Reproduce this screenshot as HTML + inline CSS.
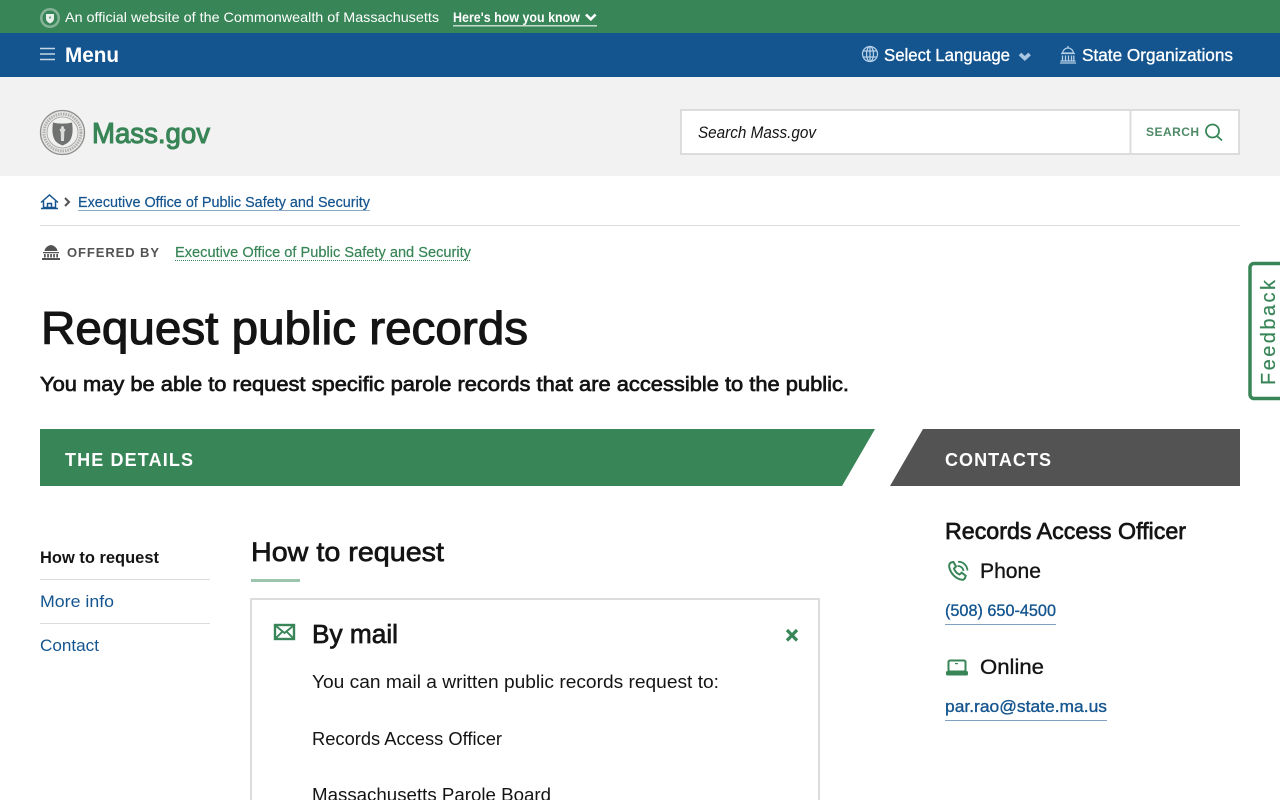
<!DOCTYPE html>
<html lang="en">
<head>
<meta charset="utf-8">
<title>Request public records | Mass.gov</title>
<style>
html,body{margin:0;padding:0;width:1280px;height:800px;overflow:hidden;background:#fff}
svg{display:block}
text{font-family:"Liberation Sans",sans-serif;white-space:pre}
.l{stroke:currentColor;stroke-width:.2px}
.m{stroke:currentColor;stroke-width:.35px}
.s{stroke:currentColor;stroke-width:.7px}
.x{stroke:currentColor;stroke-width:1.1px}
</style>
</head>
<body>
<svg xmlns="http://www.w3.org/2000/svg" width="1280" height="800" viewBox="0 0 1280 800">
<!-- top bars -->
<rect width="1280" height="33" fill="#388557"/>
<rect y="33" width="1280" height="44" fill="#14558f"/>
<rect y="77" width="1280" height="99" fill="#f2f2f2"/>

<!-- official seal -->
<circle cx="50" cy="18" r="10" fill="#b9d2c3" opacity=".6"/>
<circle cx="50" cy="18" r="7.500" fill="#388557"/>
<path d="M46 14h8v4.500c0 2.500-2 4-4 5c-2-1-4-2.500-4-5z" fill="#e8f0eb"/>
<circle cx="50" cy="17.500" r="1.100" fill="#6d9f81"/>
<text x="65" y="22" font-size="14" fill="#fff" textLength="374" lengthAdjust="spacingAndGlyphs">An official website of the Commonwealth of Massachusetts</text>
<text x="453" y="22" font-size="13.500" font-weight="700" fill="#fff" textLength="127" lengthAdjust="spacingAndGlyphs">Here's how you know</text>
<path d="M586 14.500l4.800 4.800 4.800-4.800" fill="none" stroke="#fff" stroke-width="2.600"/>
<rect x="453" y="25" width="144" height="1.500" fill="#c4dacd"/>

<!-- nav -->
<path d="M40 48.500h15M40 54h15M40 59.500h15" stroke="#c5d6e6" stroke-width="1.500" fill="none"/>
<text x="65" y="62" font-size="21" font-weight="700" fill="#fff" textLength="54" lengthAdjust="spacingAndGlyphs">Menu</text>
<g fill="none" stroke="#b5cfe8" stroke-width="1.300">
<circle cx="870" cy="54" r="7.500"/>
<ellipse cx="870" cy="54" rx="3.500" ry="7.500"/>
<path d="M863 51h14M863 57h14M870 46.500v15"/>
</g>
<text x="884" y="61" font-size="17.500" fill="#fff" style="color:#fff" class="m" textLength="126" lengthAdjust="spacingAndGlyphs">Select Language</text>
<path d="M1020 54l4.800 4.500 4.800-4.500" fill="none" stroke="#a9c6e3" stroke-width="3.600"/>
<g fill="none" stroke="#b5cfe8" stroke-width="1.300">
<path d="M1068 46v2M1062.500 53c.5-3 2.800-5 5.500-5s5 2 5.500 5z"/>
<path d="M1061 53.500h14M1062.500 55.500v5M1065.500 55.500v5M1068.500 55.500v5M1071.500 55.500v5M1073.800 55.500v5M1060.500 61h15M1060 63h16"/>
</g>
<text x="1082" y="61" font-size="17.500" fill="#fff" style="color:#fff" class="m" textLength="151" lengthAdjust="spacingAndGlyphs">State Organizations</text>

<!-- logo -->
<circle cx="62.500" cy="132.500" r="22" fill="#e7e7e5" stroke="#8d8f8d" stroke-width="1.300"/>
<circle cx="62.500" cy="132.500" r="18.500" fill="none" stroke="#b0b2b0" stroke-width="3" stroke-dasharray="1.500 1"/>
<circle cx="62.500" cy="132.500" r="15.500" fill="#f0f0ee" stroke="#a0a2a0" stroke-width=".8"/>
<path d="M53 122.500c6 1.500 13 1.500 19 0c1 7 1 13-2 18c-2 2.500-5 4-7.500 5c-2.500-1-5.500-2.500-7.500-5c-3-5-3-11-2-18z" fill="#6f7270"/>
<path d="M62.500 126c1.200 0 1.500 1.500 1.500 2.500l1.500 1-1.200 2.500-.3 9h-3l-.3-9-1.200-2.500 1.500-1c0-1 .3-2.500 1.500-2.500z" fill="#dcdcda"/>
<text x="92" y="143" font-size="29" fill="#388557" class="x" textLength="118" lengthAdjust="spacingAndGlyphs" style="color:#388557">Mass.gov</text>

<!-- search -->
<rect x="681" y="110" width="558" height="44" fill="#fff" stroke="#dcdcdc" stroke-width="2"/>
<rect x="1129.500" y="110" width="2" height="44" fill="#dcdcdc"/>
<text x="698" y="138" font-size="16.500" font-style="italic" fill="#141414" textLength="118" lengthAdjust="spacingAndGlyphs">Search Mass.gov</text>
<text x="1146" y="136" font-size="12" font-weight="700" fill="#4f8a66" textLength="53" lengthAdjust="spacing">SEARCH</text>
<circle cx="1212.500" cy="131" r="6.500" fill="none" stroke="#388557" stroke-width="1.800"/>
<path d="M1217 136l5 4.500" stroke="#388557" stroke-width="1.800" fill="none"/>

<!-- breadcrumb -->
<g fill="none" stroke="#14558f" stroke-width="1.500">
<path d="M41 202.500l8.500-7.500 8.500 7.500"/>
<path d="M43.500 201v6.500h12V201M47.500 207.500v-4h4v4"/>
<path d="M41 208.500h17"/>
</g>
<path d="M65 198l4 4-4 4" fill="none" stroke="#535353" stroke-width="2"/>
<text x="78" y="207" font-size="14.500" fill="#14558f" style="color:#14558f" class="l" textLength="292" lengthAdjust="spacingAndGlyphs">Executive Office of Public Safety and Security</text>
<rect x="78" y="210" width="292" height="1" fill="#8aaac7"/>
<rect x="40" y="225" width="1200" height="1" fill="#dcdcdc"/>

<!-- offered by -->
<g fill="#535353">
<path d="M51 243.500v1.500c-3 .5-6 2.500-6.500 6h13c-.5-3.500-3.500-5.500-6.500-6v-1.500z"/>
<path d="M43 252h16v1.300h-16zM44 254h1.700v3.500h-1.700zM47.200 254h1.700v3.500h-1.700zM50.200 254h1.700v3.500h-1.700zM53.200 254h1.700v3.500h-1.700zM56.300 254h1.700v3.500h-1.700zM42 258h18v2h-18z"/>
</g>
<text x="67" y="257" font-size="13" font-weight="700" fill="#535353" textLength="92" lengthAdjust="spacing">OFFERED BY</text>
<text x="175" y="257" font-size="14.500" fill="#388557" style="color:#388557" class="l" textLength="296" lengthAdjust="spacingAndGlyphs">Executive Office of Public Safety and Security</text>
<path d="M175 260.500h296" stroke="#388557" stroke-width="1" stroke-dasharray="1 1" fill="none"/>

<!-- title -->
<text x="41" y="344" font-size="46" fill="#141414" style="color:#141414" class="x" textLength="487" lengthAdjust="spacingAndGlyphs">Request public records</text>
<text x="40" y="391" font-size="20.500" fill="#141414" style="color:#141414" class="s" textLength="809" lengthAdjust="spacingAndGlyphs">You may be able to request specific parole records that are accessible to the public.</text>

<!-- banners -->
<polygon points="40,429 875,429 842,486 40,486" fill="#388557"/>
<polygon points="923,429 1240,429 1240,486 890,486" fill="#535353"/>
<text x="65" y="466" font-size="18" font-weight="700" fill="#fff" textLength="128" lengthAdjust="spacing">THE DETAILS</text>
<text x="945" y="466" font-size="18" font-weight="700" fill="#fff" textLength="106" lengthAdjust="spacing">CONTACTS</text>

<!-- side nav -->
<text x="40" y="563" font-size="16.500" font-weight="700" fill="#141414" textLength="119" lengthAdjust="spacingAndGlyphs">How to request</text>
<rect x="40" y="579" width="170" height="1" fill="#dcdcdc"/>
<text x="40" y="607" font-size="16.500" fill="#14558f" textLength="74" lengthAdjust="spacingAndGlyphs">More info</text>
<rect x="40" y="623" width="170" height="1" fill="#dcdcdc"/>
<text x="40" y="651" font-size="16.500" fill="#14558f" textLength="59" lengthAdjust="spacingAndGlyphs">Contact</text>

<!-- section -->
<text x="251" y="561" font-size="27" fill="#141414" style="color:#141414" class="s" textLength="193" lengthAdjust="spacingAndGlyphs">How to request</text>
<rect x="251" y="579" width="49" height="3" fill="#9cc5ad"/>
<path d="M251 801V599h568v202" fill="none" stroke="#dcdcdc" stroke-width="2"/>
<rect x="275" y="625" width="19" height="14" fill="none" stroke="#388557" stroke-width="2.400"/>
<path d="M276 626l8.500 7 8.500-7M276 638l6-6M293 638l-6-6" fill="none" stroke="#388557" stroke-width="1.900"/>
<text x="312" y="643" font-size="25.500" fill="#141414" style="color:#141414" class="s" textLength="86" lengthAdjust="spacingAndGlyphs">By mail</text>
<path d="M787 630l10 10.500M797 630l-10 10.500" stroke="#388557" stroke-width="3.200" fill="none"/>
<text x="312" y="688" font-size="18.500" fill="#141414" textLength="407" lengthAdjust="spacingAndGlyphs">You can mail a written public records request to:</text>
<text x="312" y="745" font-size="18.500" fill="#141414" textLength="190" lengthAdjust="spacingAndGlyphs">Records Access Officer</text>
<text x="312" y="801" font-size="18.500" fill="#141414" textLength="239" lengthAdjust="spacingAndGlyphs">Massachusetts Parole Board</text>

<!-- contacts -->
<text x="945" y="539" font-size="23.500" fill="#141414" style="color:#141414" class="s" textLength="241" lengthAdjust="spacingAndGlyphs">Records Access Officer</text>
<path d="M951 562.500l2.500-.5 2.500 4.500-2 2c.8 2.500 3 5 5.500 6l2.200-1.800 4 3-.8 2.500c-.5 1-1.800 1.800-3.200 1.500c-6-1-11.500-6.500-12.500-13c-.2-2 .5-3.500 1.800-4.200z" fill="none" stroke="#388557" stroke-width="2"/>
<path d="M957.500 566c3-.3 5.500 1.800 6 5M958 561.800c5-.3 9 3.500 9.500 8.700" fill="none" stroke="#388557" stroke-width="1.800"/>
<text x="980" y="578" font-size="21.500" fill="#141414" style="color:#141414" class="m" textLength="61" lengthAdjust="spacingAndGlyphs">Phone</text>
<text x="945" y="616" font-size="17" fill="#14558f" style="color:#14558f" class="m" textLength="111" lengthAdjust="spacingAndGlyphs">(508) 650-4500</text>
<rect x="945" y="624" width="111" height="1" fill="#7fa2c2"/>
<rect x="948.500" y="660.500" width="17" height="11" rx="1.500" fill="none" stroke="#388557" stroke-width="2"/>
<rect x="946" y="671" width="22" height="4.500" rx="1.500" fill="#388557"/>
<rect x="955" y="663" width="3" height="1.200" fill="#388557"/>
<text x="980" y="674" font-size="21.500" fill="#141414" style="color:#141414" class="m" textLength="64" lengthAdjust="spacingAndGlyphs">Online</text>
<text x="945" y="712" font-size="17" fill="#14558f" style="color:#14558f" class="m" textLength="162" lengthAdjust="spacingAndGlyphs">par.rao@state.ma.us</text>
<rect x="945" y="720" width="162" height="1" fill="#7fa2c2"/>

<!-- feedback -->
<path d="M1282 263.500h-28a4 4 0 0 0-4 4v127a4 4 0 0 0 4 4h28" fill="#fff" stroke="#388557" stroke-width="3.500"/>
<text transform="translate(1275 385) rotate(-90)" font-size="20" fill="#388557" style="color:#388557" class="l" textLength="105" lengthAdjust="spacing">Feedback</text>
</svg>
</body>
</html>
